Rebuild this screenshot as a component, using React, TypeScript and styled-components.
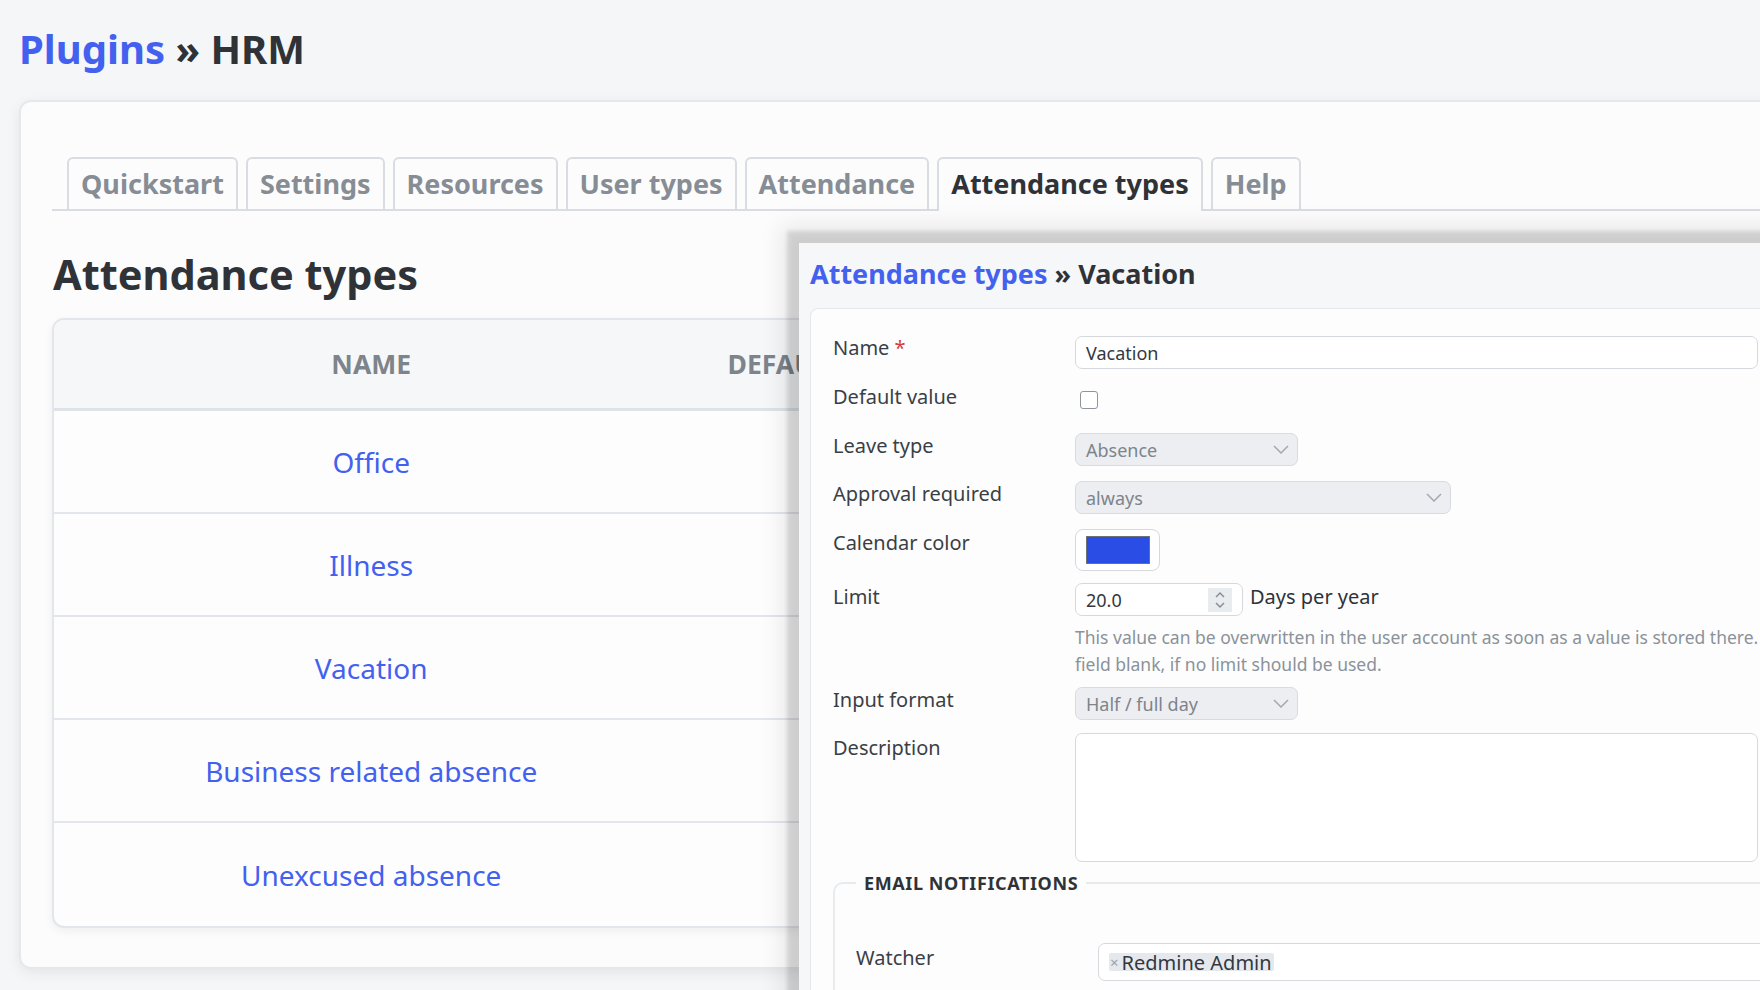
import React from "react";
import styled, { createGlobalStyle } from "styled-components";

const GlobalStyle = createGlobalStyle`
  html, body { margin: 0; padding: 0; }
  body {
    background: #f5f6f8;
    font-family: "Noto Sans", "Open Sans", sans-serif;
    color: #2f3338;
    overflow: hidden;
  }
  * { box-sizing: border-box; }
`;

const Page = styled.div`
  position: relative;
  width: 1760px;
  height: 990px;
  overflow: hidden;
  padding: 25px 0 0 19px;
`;

const PageTitle = styled.h1`
  margin: 0;
  font-size: 40px;
  line-height: 48px;
  font-weight: 700;
  color: #2f3338;
`;

const Link = styled.a`
  color: #4361ee;
  text-decoration: none;
`;

const MainBox = styled.section`
  margin-top: 27px;
  width: 1800px;
  background: #fcfcfd;
  border: 2px solid #e6e9ec;
  border-radius: 12px;
  box-shadow: 0 4px 14px rgba(0, 0, 0, 0.07);
  padding: 55px 0 39px 31px;
`;

const TabBar = styled.nav`
  display: flex;
  align-items: flex-end;
  gap: 8px;
  padding-left: 15px;
  border-bottom: 2px solid #d9dde2;
`;

const Tab = styled.a<{ $active?: boolean }>`
  display: flex;
  align-items: center;
  height: ${(p) => (p.$active ? 54 : 52)}px;
  margin-bottom: ${(p) => (p.$active ? -2 : 0)}px;
  padding: 0 12px ${(p) => (p.$active ? 3 : 1)}px;
  border: 2px solid #d9dde2;
  border-bottom: none;
  border-radius: 6px 6px 0 0;
  background: #fcfcfd;
  font-size: 27px;
  font-weight: 700;
  white-space: nowrap;
  color: ${(p) => (p.$active ? "#2f3338" : "#868d95")};
`;

const Heading = styled.h2`
  margin: 39px 0 20px 1px;
  font-size: 41.5px;
  line-height: 48px;
  font-weight: 700;
  color: #2f3338;
`;

const Table = styled.table`
  border-collapse: separate;
  border-spacing: 0;
  width: 1500px;
  border: 2px solid #e3e6ea;
  border-radius: 12px;
  overflow: hidden;
  background: #fdfdfe;
  box-shadow: 0 3px 10px rgba(0, 0, 0, 0.06);
`;

const HeadCell = styled.th<{ $w: number }>`
  width: ${(p) => p.$w}px;
  height: 91px;
  padding: 0;
  background: #f6f7f9;
  border-bottom: 3px solid #dfe3e7;
  font-size: 26.5px;
  font-weight: 700;
  text-transform: uppercase;
  color: #7d848c;
  text-align: center;
`;

const BodyRow = styled.tr`
  &:last-child td {
    border-bottom: none;
  }
`;

const Cell = styled.td`
  height: 103px;
  padding: 1px 0 0;
  border-bottom: 2px solid #e3e6ea;
  font-size: 28px;
  text-align: center;
`;

const Dialog = styled.div`
  position: absolute;
  left: 799px;
  top: 243px;
  width: 1100px;
  height: 900px;
  background: #f6f7f9;
  padding: 15px 0 0 11px;
  box-shadow: 0 0 4px 12px rgba(0, 0, 0, 0.12), 0 0 22px 18px rgba(0, 0, 0, 0.08);
`;

const DialogTitle = styled.h3`
  margin: 0 0 19px;
  font-size: 27px;
  line-height: 31px;
  font-weight: 700;
  color: #2f3338;
`;

const FormCard = styled.div`
  width: 1100px;
  height: 800px;
  background: #fdfdfe;
  border: 1px solid #e4e7eb;
  border-radius: 8px;
  padding: 27px 0 0 22px;
`;

const FormRow = styled.div<{ $mb: number }>`
  display: grid;
  grid-template-columns: 242px 1fr;
  align-items: start;
  margin-bottom: ${(p) => p.$mb}px;
`;

const Label = styled.label<{ $pt?: number }>`
  font-size: 20px;
  line-height: 24px;
  padding-top: ${(p) => p.$pt ?? 1}px;
  color: #3a3f45;
  white-space: nowrap;
`;

const Required = styled.span`
  color: #d63c3c;
`;

const TextInput = styled.div<{ $w: number; $h?: number }>`
  width: ${(p) => p.$w}px;
  height: ${(p) => p.$h ?? 33}px;
  border: 1.5px solid #d5d9de;
  border-radius: 7px;
  background: #ffffff;
  padding: 0 10px;
  display: flex;
  align-items: center;
  font-size: 18px;
  color: #333840;
`;

const Checkbox = styled.span`
  display: block;
  width: 18px;
  height: 18px;
  margin: 6px 0 0 5px;
  border: 1.5px solid #8f959c;
  border-radius: 3px;
  background: #fff;
`;

const Select = styled.div<{ $w: number }>`
  width: ${(p) => p.$w}px;
  height: 33px;
  border: 1.5px solid #d8dbe0;
  border-radius: 7px;
  background: #eceef1;
  padding: 0 8px 0 10px;
  display: flex;
  align-items: center;
  justify-content: space-between;
  font-size: 18px;
  color: #7d848c;
`;

const ColorBox = styled.div`
  width: 85px;
  height: 42px;
  border: 1.5px solid #d5d9de;
  border-radius: 8px;
  background: #fff;
  padding: 6px 0 0 10px;
`;

const Swatch = styled.div<{ $color: string }>`
  width: 64px;
  height: 28px;
  background: ${(p) => p.$color};
  border: 1px solid #6d7178;
`;

const InlineGroup = styled.div`
  display: flex;
  align-items: flex-start;
  gap: 7px;
`;

const Spinner = styled.span`
  margin-left: auto;
  width: 24px;
  height: 24px;
  background: #e9ecef;
  display: flex;
  align-items: center;
  justify-content: center;
`;

const Unit = styled.span`
  font-size: 20px;
  line-height: 24px;
  padding-top: 2px;
  color: #2f3338;
`;

const Help = styled.p`
  margin: 8px 0 0;
  font-size: 17.5px;
  line-height: 27px;
  color: #8b9299;
  white-space: nowrap;
`;

const Fieldset = styled.fieldset`
  margin: 9px 0 0;
  width: 1100px;
  border: 2px solid #e8ebee;
  border-radius: 10px;
  padding: 48px 0 40px 21px;
`;

const Legend = styled.legend`
  padding: 0 8px;
  font-size: 18px;
  line-height: 24px;
  font-weight: 700;
  letter-spacing: 0.6px;
  text-transform: uppercase;
  color: #2f3338;
`;

const Chip = styled.span`
  display: inline-flex;
  align-items: center;
  height: 18px;
  padding: 0 2px 0 1px;
  background: #e5e9ee;
  border-radius: 2px;
  font-size: 20px;
  color: #333840;
`;

const ChipRemove = styled.span`
  font-size: 15px;
  color: #9aa0a6;
  margin-right: 3px;
`;

const Chevron = () => (
  <svg width="16" height="9" viewBox="0 0 16 9" fill="none">
    <polyline points="1,1 8,8 15,1" stroke="#a3a9b0" strokeWidth="1.5" />
  </svg>
);

const SpinIcon = () => (
  <svg width="12" height="20" viewBox="0 0 12 20" fill="none">
    <polyline points="2,7 6,3 10,7" stroke="#858b92" strokeWidth="1.4" />
    <polyline points="2,13 6,17 10,13" stroke="#858b92" strokeWidth="1.4" />
  </svg>
);

const tabs = [
  "Quickstart",
  "Settings",
  "Resources",
  "User types",
  "Attendance",
  "Attendance types",
  "Help",
];

const types = [
  "Office",
  "Illness",
  "Vacation",
  "Business related absence",
  "Unexcused absence",
];

export default function App() {
  return (
    <>
      <GlobalStyle />
      <Page>
        <PageTitle>
          <Link>Plugins</Link> » HRM
        </PageTitle>
        <MainBox>
          <TabBar>
            {tabs.map((t) => (
              <Tab key={t} $active={t === "Attendance types"}>
                {t}
              </Tab>
            ))}
          </TabBar>
          <Heading>Attendance types</Heading>
          <Table>
            <thead>
              <tr>
                <HeadCell $w={636}>Name</HeadCell>
                <HeadCell $w={286}>Default value</HeadCell>
                <HeadCell $w={300} />
                <HeadCell $w={278} />
              </tr>
            </thead>
            <tbody>
              {types.map((t) => (
                <BodyRow key={t}>
                  <Cell>
                    <Link>{t}</Link>
                  </Cell>
                  <Cell />
                  <Cell />
                  <Cell />
                </BodyRow>
              ))}
            </tbody>
          </Table>
        </MainBox>

        <Dialog>
          <DialogTitle>
            <Link>Attendance types</Link> » Vacation
          </DialogTitle>
          <FormCard>
            <FormRow $mb={16}>
              <Label $pt={0}>
                Name <Required>*</Required>
              </Label>
              <TextInput $w={683}>Vacation</TextInput>
            </FormRow>
            <FormRow $mb={24}>
              <Label $pt={0}>Default value</Label>
              <Checkbox />
            </FormRow>
            <FormRow $mb={15}>
              <Label>Leave type</Label>
              <Select $w={223}>
                Absence
                <Chevron />
              </Select>
            </FormRow>
            <FormRow $mb={15}>
              <Label>Approval required</Label>
              <Select $w={376}>
                always
                <Chevron />
              </Select>
            </FormRow>
            <FormRow $mb={12}>
              <Label $pt={2}>Calendar color</Label>
              <ColorBox>
                <Swatch $color="#2a4de6" />
              </ColorBox>
            </FormRow>
            <FormRow $mb={9}>
              <Label $pt={2}>Limit</Label>
              <div>
                <InlineGroup>
                  <TextInput $w={168}>
                    20.0
                    <Spinner>
                      <SpinIcon />
                    </Spinner>
                  </TextInput>
                  <Unit>Days per year</Unit>
                </InlineGroup>
                <Help>
                  This value can be overwritten in the user account as soon as a value is stored there. Leave the
                  <br />
                  field blank, if no limit should be used.
                </Help>
              </div>
            </FormRow>
            <FormRow $mb={13}>
              <Label>Input format</Label>
              <Select $w={223}>
                Half / full day
                <Chevron />
              </Select>
            </FormRow>
            <FormRow $mb={0}>
              <Label $pt={3}>Description</Label>
              <TextInput $w={683} $h={129} />
            </FormRow>
            <Fieldset>
              <Legend>Email notifications</Legend>
              <FormRow $mb={0}>
                <Label $pt={3}>Watcher</Label>
                <TextInput $w={683} $h={38}>
                  <Chip>
                    <ChipRemove>×</ChipRemove>Redmine Admin
                  </Chip>
                </TextInput>
              </FormRow>
            </Fieldset>
          </FormCard>
        </Dialog>
      </Page>
    </>
  );
}
